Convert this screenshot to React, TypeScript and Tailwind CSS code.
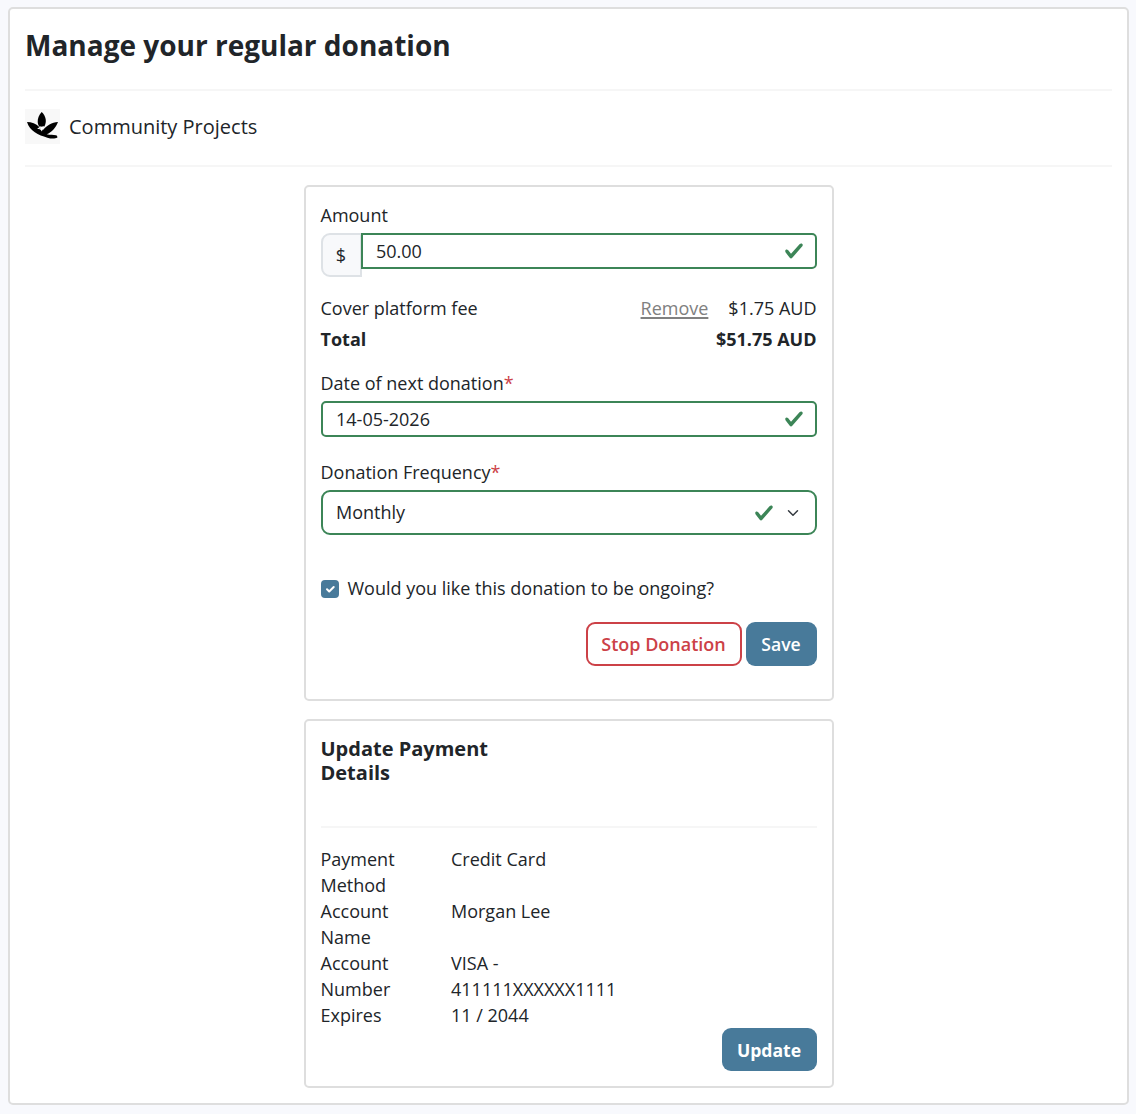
import { useState } from 'react';
import type { ReactNode } from 'react';

interface PaymentRow {
  label: string;
  value: string;
}

const PAYMENT_ROWS: PaymentRow[] = [
  { label: 'Payment Method', value: 'Credit Card' },
  { label: 'Account Name', value: 'Morgan Lee' },
  { label: 'Account Number', value: 'VISA - 411111XXXXXX1111' },
  { label: 'Expires', value: '11 / 2044' }
];

const ValidIcon = () => (
  <svg viewBox="0 0 8 8" className="size-5 shrink-0" fill="#3c8557">
    <path d="M2.3 6.73.6 4.53c-.4-1.04.46-1.4 1.1-.8l1.1 1.4 3.4-3.8c.6-.63 1.6-.27 1.2.7l-4 4.6c-.43.5-.8.4-1.1.1z" />
  </svg>
);

const ChevronIcon = () => (
  <svg viewBox="0 0 16 16" className="size-3 shrink-0" fill="none" stroke="#343a40" strokeWidth="2" strokeLinecap="round" strokeLinejoin="round">
    <path d="m2 5 6 6 6-6" />
  </svg>
);

const Logo = () => (
  <div className="flex size-[35px] items-center justify-center bg-[#f8f8f8]">
    <svg viewBox="0 0 35 35" className="size-[35px]">
      <path d="M16.7 3C14 6 12.500 9.500 12.700 13c.1 2.200 1 3.800 2 5.100l4.500-.4c1.400-2.400 1.900-5 1.500-7.500C20.200 7.500 18.800 5 16.700 3z" />
      <path d="M2 13.100c4.500.1 9.300 1.500 12 4.700l4 3.200c3.500-4.600 8.800-7.500 15-8.100-2.100 5.600-6.100 10.200-11.300 12.300 3.500 1.100 6.600.2 9.300 1 1.100.4 1.500 1.200 1.400 2.300-2.400 1.500-6.500 1.300-10 .2C13.300 26.300 4.800 22.300 2 13.100z" />
      <path d="m12 19.800 1.700-1c.4-1 1.500-1.500 2.600-1.100 1.100 0 2.300-.3 3.400-.9-1 1-1.900 2.400-2.100 4l-.9 1.700c-.5-1.400-1.500-2.300-3-2.500z" fill="#fff" />
      <circle cx="15" cy="19" r=".4" />
    </svg>
  </div>
);

const Card = ({ className, children }: { className: string; children: ReactNode }) => (
  <section className={`mx-auto w-[530px] rounded-[5px] border-2 border-[#dedede] bg-white px-[15px] ${className}`}>
    {children}
  </section>
);

export default function App() {
  const [amount, setAmount] = useState('50.00');
  const [date, setDate] = useState('14-05-2026');
  const [ongoing, setOngoing] = useState(true);

  return (
    <div className="h-[1114px] bg-[#f8f9fd] pt-[7px] pl-2 font-['Open_Sans',sans-serif] text-[18px] leading-[26px] text-[#212529]">
      <main className="h-[1098px] w-[1121px] rounded-[5px] border-2 border-[#dedede] bg-white px-[15px]">
        <h1 className="pt-[19px] text-[28px] leading-[34px] font-bold">Manage your regular donation</h1>
        <hr className="mt-[27px] border-t-2 border-[#f6f6f6]" />
        <div className="mt-[18px] flex items-center gap-[9px]">
          <Logo />
          <h2 className="text-[20px] leading-6">Community Projects</h2>
        </div>
        <hr className="mt-[21px] border-t-2 border-[#f6f6f6]" />

        <Card className="mt-[18px] h-[516px] pt-[15px]">
          <label htmlFor="amount" className="block">Amount</label>
          <div className="mt-[5px] flex h-11 items-start">
            <span className="flex h-11 w-[41px] items-center justify-center rounded-l-[9px] border-2 border-[#dee2e6] bg-[#f8f9fb]">$</span>
            <div className="z-10 -ml-px flex h-9 flex-1 items-center rounded-r-[5px] border-2 border-[#3c8557] bg-white pr-[11px] pl-[13.5px]">
              <input id="amount" className="min-w-0 flex-1 outline-none" value={amount} onChange={(e) => setAmount(e.target.value)} />
              <ValidIcon />
            </div>
          </div>

          <div className="mt-[18px] flex justify-between">
            <span>Cover platform fee</span>
            <span>
              <a href="#" className="mr-5 text-[#808080] underline decoration-2 underline-offset-[2px]">Remove</a>
              $1.75 AUD
            </span>
          </div>
          <div className="mt-[5px] flex justify-between font-bold">
            <span>Total</span>
            <span>$51.75 AUD</span>
          </div>

          <label htmlFor="date" className="mt-[18px] block">
            Date of next donation<span className="text-[#cc4147]">*</span>
          </label>
          <div className="mt-[5px] flex h-9 items-center rounded-[5px] border-2 border-[#3c8557] pr-[11px] pl-[13.5px]">
            <input id="date" className="min-w-0 flex-1 outline-none" value={date} onChange={(e) => setDate(e.target.value)} />
            <ValidIcon />
          </div>

          <label className="mt-[22px] block">
            Donation Frequency<span className="text-[#cc4147]">*</span>
          </label>
          <button type="button" className="mt-[5px] flex h-[45px] w-full items-center rounded-[9px] border-2 border-[#3c8557] pr-4 pl-[13.5px] text-left">
            <span className="flex-1 pb-0.5">Monthly</span>
            <ValidIcon />
            <span className="ml-[13px]"><ChevronIcon /></span>
          </button>

          <label className="mt-10 flex items-center">
            <input type="checkbox" className="peer sr-only" checked={ongoing} onChange={(e) => setOngoing(e.target.checked)} />
            <span className="mt-0.5 mr-[9px] flex size-[18px] items-center justify-center rounded-[4px] bg-[#487a9a]">
              {ongoing && (
                <svg viewBox="0 0 18 18" className="size-[18px]" fill="none" stroke="#fff" strokeWidth="2" strokeLinecap="round" strokeLinejoin="round">
                  <path d="m6 9.300 2.200 2.200L12.700 7" />
                </svg>
              )}
            </span>
            Would you like this donation to be ongoing?
          </label>

          <div className="mt-[21px] flex justify-end gap-1">
            <button type="button" className="h-11 w-[156px] rounded-[9px] border-2 border-[#cc4147] font-semibold text-[#cc4147]">Stop Donation</button>
            <button type="button" className="h-11 w-[71px] rounded-[9px] bg-[#487a9a] text-[17.6px] font-semibold text-white">Save</button>
          </div>
        </Card>

        <Card className="mt-[18px] h-[369px] pt-4">
          <h3 className="w-[190px] text-[20px] leading-6 font-bold">Update Payment Details</h3>
          <hr className="mt-[41px] border-t-2 border-[#f6f6f6]" />
          <dl className="mt-[18px]">
            {PAYMENT_ROWS.map(row => (
              <div key={row.label} className="flex">
                <dt className="w-[130.5px] pr-[30px]">{row.label}</dt>
                <dd className="w-[180px]">{row.value}</dd>
              </div>
            ))}
          </dl>
          <div className="flex justify-end">
            <button type="button" className="h-[43px] w-[95px] rounded-[9px] bg-[#487a9a] text-[17.6px] font-bold text-white">Update</button>
          </div>
        </Card>
      </main>
    </div>
  );
}
